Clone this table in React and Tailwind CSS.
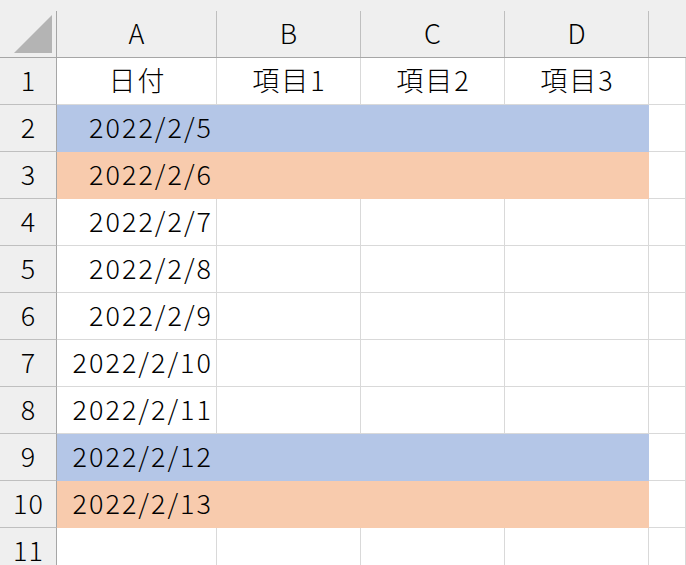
import React from "react";

const rows = [
  { n: 1, cells: ["日付", "項目1", "項目2", "項目3"], head: true },
  { n: 2, date: "2022/2/5", fill: "blue" },
  { n: 3, date: "2022/2/6", fill: "orange" },
  { n: 4, date: "2022/2/7" },
  { n: 5, date: "2022/2/8" },
  { n: 6, date: "2022/2/9" },
  { n: 7, date: "2022/2/10" },
  { n: 8, date: "2022/2/11" },
  { n: 9, date: "2022/2/12", fill: "blue" },
  { n: 10, date: "2022/2/13", fill: "orange" },
  { n: 11, date: "" },
];

const fills = {
  blue: "bg-[#b4c6e7] border-[#b4c6e7]",
  orange: "bg-[#f8cbad] border-[#f8cbad]",
};

function Cell({ children, fill, last, align = "right" }) {
  const base = fill && !last ? fills[fill] : "bg-white border-[#d9d9d9]";
  const alignCls = align === "center" ? "justify-center pl-[2px]" : "justify-end pr-[3px]";
  return (
    <div className={`h-[47px] border-r border-b flex items-center pb-[3px] tracking-[2px] ${alignCls} ${base}`}>
      {children}
    </div>
  );
}

export default function App() {
  return (
    <div
      className="w-[686px] h-[565px] overflow-hidden bg-white text-[27px] font-light text-black leading-none"
      style={{ fontFamily: '"Noto Sans CJK JP", "Noto Sans", sans-serif' }}
    >
      <div className="grid grid-cols-[57px_160px_144px_144px_144px_1fr]">
        {/* column headers */}
        <div className="h-[58px] bg-[#efefef] pt-[11px] border-b border-[#a6a6a6]">
          <div className="h-full border-r border-[#a6a6a6] flex items-end justify-end pr-[3px] pb-[3px]">
            <svg width="40" height="40" viewBox="0 0 40 40">
              <polygon points="39,1 39,39 1,39" fill="#b4b4b4" />
            </svg>
          </div>
        </div>
        {["A", "B", "C", "D", ""].map((c, i) => (
          <div key={i} className="h-[58px] bg-[#efefef] pt-[11px] border-b border-[#a6a6a6]">
            <div
              className={`h-full flex items-center justify-center pb-[3px] ${
                i < 4 ? "border-r border-[#bfbfbf]" : ""
              }`}
            >
              {c}
            </div>
          </div>
        ))}

        {rows.map((r) => (
          <React.Fragment key={r.n}>
            <div className="h-[47px] bg-[#efefef] border-r border-b border-r-[#a6a6a6] border-b-[#bfbfbf] flex items-center justify-center pb-[3px] tracking-[1px] pl-[1px]">
              {r.n}
            </div>
            {r.head ? (
              <>
                {r.cells.map((t) => (
                  <Cell key={t} align="center">
                    {t}
                  </Cell>
                ))}
                <Cell />
              </>
            ) : (
              <>
                <Cell fill={r.fill}>{r.date}</Cell>
                <Cell fill={r.fill} />
                <Cell fill={r.fill} />
                <Cell fill={r.fill} />
                <Cell fill={r.fill} last />
              </>
            )}
          </React.Fragment>
        ))}
      </div>
    </div>
  );
}
